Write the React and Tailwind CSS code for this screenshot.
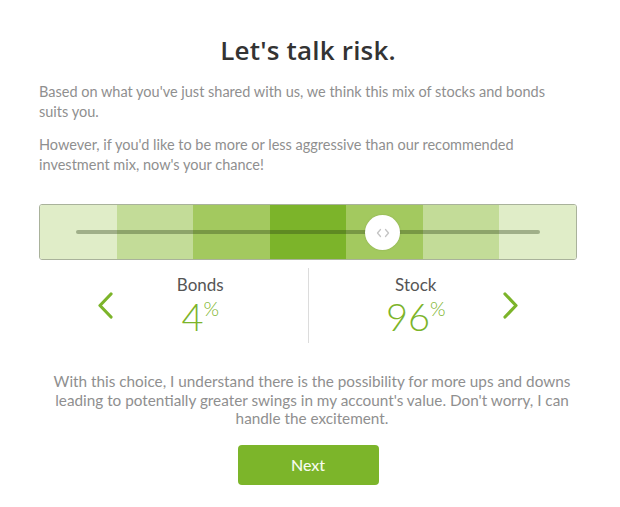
import React from "react";

const segs = ["bg-[#e0edc8]", "bg-[#c3dc98]", "bg-[#a3c95f]", "bg-[#7cb42a]", "bg-[#a3c95f]", "bg-[#c3dc98]", "bg-[#e0edc8]"];

function Chevron({ dir }) {
  return (
    <svg width="17" height="27" viewBox="0 0 17 27" fill="none">
      {dir === "left" ? (
        <path d="M14 2 L3 13.5 L14 25" stroke="#7cb42a" strokeWidth="3.2" strokeLinecap="round" strokeLinejoin="round" />
      ) : (
        <path d="M3 2 L14 13.5 L3 25" stroke="#7cb42a" strokeWidth="3.2" strokeLinecap="round" strokeLinejoin="round" />
      )}
    </svg>
  );
}

function Stat({ label, value }) {
  return (
    <div className="flex-1 flex flex-col items-center">
      <div className="text-[17px] leading-[20px] text-[#555] mt-[7px]">{label}</div>
      <div className="flex items-start text-[#7cb42a] font-light mt-[3px]">
        <span className="text-[38px] leading-[36px]">{value}</span>
        <span className="text-[20px] leading-[20px]">%</span>
      </div>
    </div>
  );
}

export default function App() {
  return (
    <div className="w-[620px] h-[507px] bg-white" style={{ fontFamily: "Lato, 'Open Sans', sans-serif" }}>
      <div className="ml-[39px] w-[538px] pt-[34px]">
        <h1 className="text-center text-[26px] leading-[32px] font-semibold text-[#333] tracking-[0.2px]" style={{ fontFamily: "'Open Sans', Lato, sans-serif" }}>Let's talk risk.</h1>
        <p className="mt-[16px] text-[14.5px] leading-[20px] text-[#8f8f8f]">
          Based on what you've just shared with us, we think this mix of stocks and bonds suits you.
        </p>
        <p className="mt-[13px] text-[14.5px] leading-[20px] text-[#8f8f8f]">
          However, if you'd like to be more or less aggressive than our recommended investment mix, now's your chance!
        </p>

        <div className="relative mt-[29px] h-[56px] border border-[#a9b29b] rounded-[3px] overflow-hidden flex">
          {segs.map((c, i) => (
            <div key={i} className={`flex-1 ${c}`} />
          ))}
          <div className="absolute left-[36px] right-[36px] top-[25px] h-[4px] rounded-full bg-[rgba(40,60,20,0.35)]" />
          <div className="absolute left-[325px] top-[10px] w-[35px] h-[35px] rounded-full bg-white flex items-center justify-center shadow-[0_0_2px_rgba(0,0,0,0.15)]">
            <svg width="14" height="10" viewBox="0 0 14 10" fill="none">
              <path d="M4.5 1.5 L1.5 5 L4.5 8.5" stroke="#c4c4c4" strokeWidth="1.3" strokeLinecap="round" strokeLinejoin="round" />
              <path d="M9.5 1.5 L12.5 5 L9.5 8.5" stroke="#c4c4c4" strokeWidth="1.3" strokeLinecap="round" strokeLinejoin="round" />
            </svg>
          </div>
        </div>

        <div className="mt-[8px] mx-[54px] h-[75px] flex">
          <div className="flex-1 flex items-start">
            <div className="mt-[24px] ml-[4px]"><Chevron dir="left" /></div>
            <Stat label="Bonds" value="4" />
            <div className="w-[21px]" />
          </div>
          <div className="w-px bg-[#dcdcdc]" />
          <div className="flex-1 flex items-start">
            <div className="w-[21px]" />
            <Stat label="Stock" value="96" />
            <div className="mt-[24px] mr-[4px]"><Chevron dir="right" /></div>
          </div>
        </div>
      </div>

      <p className="mt-[29px] mx-auto w-[560px] pl-[4px] text-center text-[15.3px] leading-[18.5px] text-[#8f8f8f]">
        With this choice, I understand there is the possibility for more ups and downs leading to potentially greater swings in my account's value. Don't worry, I can handle the excitement.
      </p>

      <div className="flex justify-center mt-[17px] pr-[4px]">
        <button className="w-[141px] h-[40px] rounded-[4px] bg-[#7cb52a] text-[#f6fbef] text-[16px] font-medium">Next</button>
      </div>
    </div>
  );
}
